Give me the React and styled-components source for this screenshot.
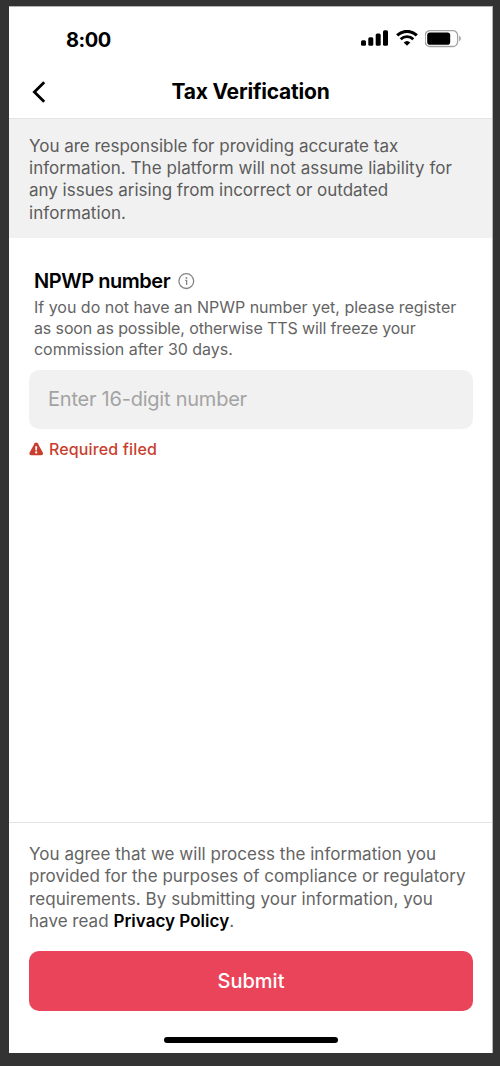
import React, { useState } from "react";
import styled, { createGlobalStyle } from "styled-components";

const App = () => {
  const [npwp, setNpwp] = useState("");

  return (
    <>
      <GlobalStyle />
      <Backdrop>
        <Screen>
          <StatusBar>
            <Clock>8:00</Clock>
            <StatusIcons>
              <SignalIcon />
              <WifiIcon />
              <BatteryIcon />
            </StatusIcons>
          </StatusBar>

          <NavBar>
            <BackButton aria-label="Back">
              <svg width="14" height="22" viewBox="0 0 14 22" fill="none">
                <path
                  d="M12.2 1.3 L2.4 11 L12.2 20.7"
                  stroke="#000"
                  strokeWidth="2.8"
                />
              </svg>
            </BackButton>
            <Title>Tax Verification</Title>
          </NavBar>

          <Banner>
            <Line $spacing="-0.02px">You are responsible for providing accurate tax</Line>
            <Line $spacing="0.055px">information. The platform will not assume liability for</Line>
            <Line $spacing="-0.015px">any issues arising from incorrect or outdated</Line>
            <Line $spacing="0.08px">information.</Line>
          </Banner>

          <FormSection>
            <FieldLabel>
              <LabelText>NPWP number</LabelText>
              <InfoIcon />
            </FieldLabel>
            <FieldHint>
              <Line $spacing="-0.015px">If you do not have an NPWP number yet, please register</Line>
              <Line $spacing="-0.12px">as soon as possible, otherwise TTS will freeze your</Line>
              <Line $spacing="-0.02px">commission after 30 days.</Line>
            </FieldHint>
            <NumberInput
              placeholder="Enter 16-digit number"
              inputMode="numeric"
              maxLength={16}
              value={npwp}
              onChange={(e) => setNpwp(e.target.value)}
            />
            <ErrorRow>
              <WarningIcon />
              <ErrorText>Required filed</ErrorText>
            </ErrorRow>
          </FormSection>

          <Footer>
            <Agreement>
              <Line $spacing="0.03px">You agree that we will process the information you</Line>
              <Line $spacing="0.02px">provided for the purposes of compliance or regulatory</Line>
              <Line $spacing="0.07px">requirements. By submitting your information, you</Line>
              <Line $spacing="0.02px">
                have read <PolicyLink>Privacy Policy</PolicyLink>.
              </Line>
            </Agreement>
            <SubmitButton type="button">Submit</SubmitButton>
            <HomeIndicator />
          </Footer>
        </Screen>
      </Backdrop>
    </>
  );
};

const SignalIcon = () => (
  <svg width="28" height="17" viewBox="0 0 28 17">
    <rect x="0" y="10.2" width="5" height="5.6" rx="1.5" />
    <rect x="7.3" y="7.2" width="5" height="8.6" rx="1.5" />
    <rect x="14.7" y="3.6" width="5" height="12.2" rx="1.5" />
    <rect x="22" y="0.2" width="5" height="15.6" rx="1.5" />
  </svg>
);

const WifiIcon = () => (
  <svg width="22" height="17" viewBox="0 0 22 17" fill="none">
    <path d="M1.2 5.4 A14 14 0 0 1 20.8 5.4" stroke="#000" strokeWidth="3.1" />
    <path d="M4.7 9.2 A9 9 0 0 1 17.3 9.2" stroke="#000" strokeWidth="2.9" />
    <path d="M11 15.7 L7.7 12.5 A4.9 4.9 0 0 1 14.3 12.5 Z" fill="#000" />
  </svg>
);

const BatteryIcon = () => (
  <svg width="37" height="18" viewBox="0 0 37 18">
    <rect
      x="0.2"
      y="0.6"
      width="32.4"
      height="15.9"
      rx="4.8"
      fill="none"
      stroke="#a3a3a3"
      strokeWidth="1.3"
    />
    <rect x="2.2" y="2.4" width="23" height="12.3" rx="2.8" />
    <path d="M34.2 5.8 C36.3 6.6 36.3 10.4 34.2 11.2 Z" fill="#9a9a9a" />
  </svg>
);

const InfoIcon = () => (
  <svg width="17" height="17" viewBox="0 0 17 17" fill="none">
    <circle cx="8.3" cy="8.1" r="7.4" stroke="#858585" strokeWidth="1.3" />
    <circle cx="8.4" cy="4.9" r="0.95" fill="#858585" />
    <path d="M7.2 7.4 H8.6 V12.1" stroke="#858585" strokeWidth="1.3" />
  </svg>
);

const WarningIcon = () => (
  <svg width="15" height="14" viewBox="0 0 15 14">
    <path
      d="M5.7 1.3 C6.4 0.1 8 0.1 8.7 1.3 L13.8 10.6 C14.5 12 13.6 13.3 12.2 13.3 H2.2 C0.8 13.3 -0.1 12 0.6 10.6 Z"
      fill="#c93f2f"
    />
    <path d="M6.2 4.3 H8.2 L7.9 8.6 H6.5 Z" fill="#fff" />
    <circle cx="7.2" cy="10.4" r="1.1" fill="#fff" />
  </svg>
);

const GlobalStyle = createGlobalStyle`
  body {
    margin: 0;
    background: #333;
  }
  * {
    box-sizing: border-box;
  }
`;

const Backdrop = styled.div`
  height: 1066px;
  padding: 6px 7px 13px 9px;
  background: #333;
  font-family: Inter, "Liberation Sans", sans-serif;
`;

const Screen = styled.div`
  display: flex;
  flex-direction: column;
  height: 1047px;
  background: #fff;
  border-top: 1px solid #b5b5b5;
  border-right: 1px solid #b5b5b5;
`;

const StatusBar = styled.div`
  display: flex;
  justify-content: space-between;
  align-items: flex-start;
  height: 57px;
  padding: 22px 30px 0 57px;
`;

const Clock = styled.span`
  font-size: 20px;
  font-weight: 700;
  line-height: 22px;
  letter-spacing: -0.5px;
`;

const StatusIcons = styled.div`
  display: flex;
  gap: 7px;
  padding-top: 1px;
`;

const NavBar = styled.header`
  display: grid;
  grid-template-columns: 60px 1fr 60px;
  align-items: center;
  height: 54px;
  padding-top: 1px;
`;

const BackButton = styled.button`
  display: flex;
  padding: 0 0 0 23px;
  border: none;
  background: none;
`;

const Title = styled.h1`
  margin: 0;
  text-align: center;
  font-size: 21px;
  font-weight: 700;
  line-height: 28px;
  letter-spacing: -0.2px;
`;

const Line = styled.span`
  display: block;
  white-space: nowrap;
  letter-spacing: ${(props) => props.$spacing};
`;

const Banner = styled.div`
  height: 120px;
  padding: 16px 20px 0;
  border-top: 1px solid #e4e4e4;
  background: #f1f1f1;
  color: #5c5c5c;
  font-size: 17px;
  line-height: 22.2px;
`;

const FormSection = styled.main`
  display: flex;
  flex-direction: column;
  flex: 1;
  padding: 30px 19px 0 20px;
`;

const FieldLabel = styled.div`
  display: flex;
  align-items: center;
  gap: 8px;
  height: 26px;
  padding-left: 5px;
`;

const LabelText = styled.label`
  font-size: 20px;
  font-weight: 600;
  line-height: 26px;
  letter-spacing: -0.45px;
`;

const FieldHint = styled.div`
  padding-left: 5px;
  margin-top: 3px;
  color: #646464;
  font-size: 16px;
  line-height: 21px;
`;

const NumberInput = styled.input`
  height: 59px;
  margin-top: 10px;
  padding: 0 20px 1px 19px;
  border: none;
  border-radius: 10px;
  background: #f1f1f1;
  font-family: inherit;
  font-size: 20px;
  letter-spacing: -0.23px;

  &::placeholder {
    color: #a3a3a3;
    opacity: 1;
  }
`;

const ErrorRow = styled.div`
  display: flex;
  align-items: center;
  gap: 5px;
  margin-top: 9px;
`;

const ErrorText = styled.span`
  color: #c93f2f;
  font-size: 16px;
  font-weight: 500;
  line-height: 22px;
  letter-spacing: 0.14px;
`;

const Footer = styled.footer`
  display: flex;
  flex-direction: column;
  height: 231px;
  padding: 20px 19px 0 20px;
  border-top: 1px solid #e4e4e4;
`;

const Agreement = styled.div`
  color: #646464;
  font-size: 17px;
  line-height: 22.3px;
`;

const PolicyLink = styled.a`
  color: #000;
  font-weight: 600;
`;

const SubmitButton = styled.button`
  height: 60px;
  flex-shrink: 0;
  margin-top: 19px;
  border: none;
  border-radius: 10px;
  background: #ea445a;
  color: #fff;
  font-family: inherit;
  font-size: 20px;
  font-weight: 500;
`;

const HomeIndicator = styled.div`
  width: 174px;
  height: 6px;
  margin: 26px auto 0;
  border-radius: 3px;
  background: #000;
`;

export default App;
